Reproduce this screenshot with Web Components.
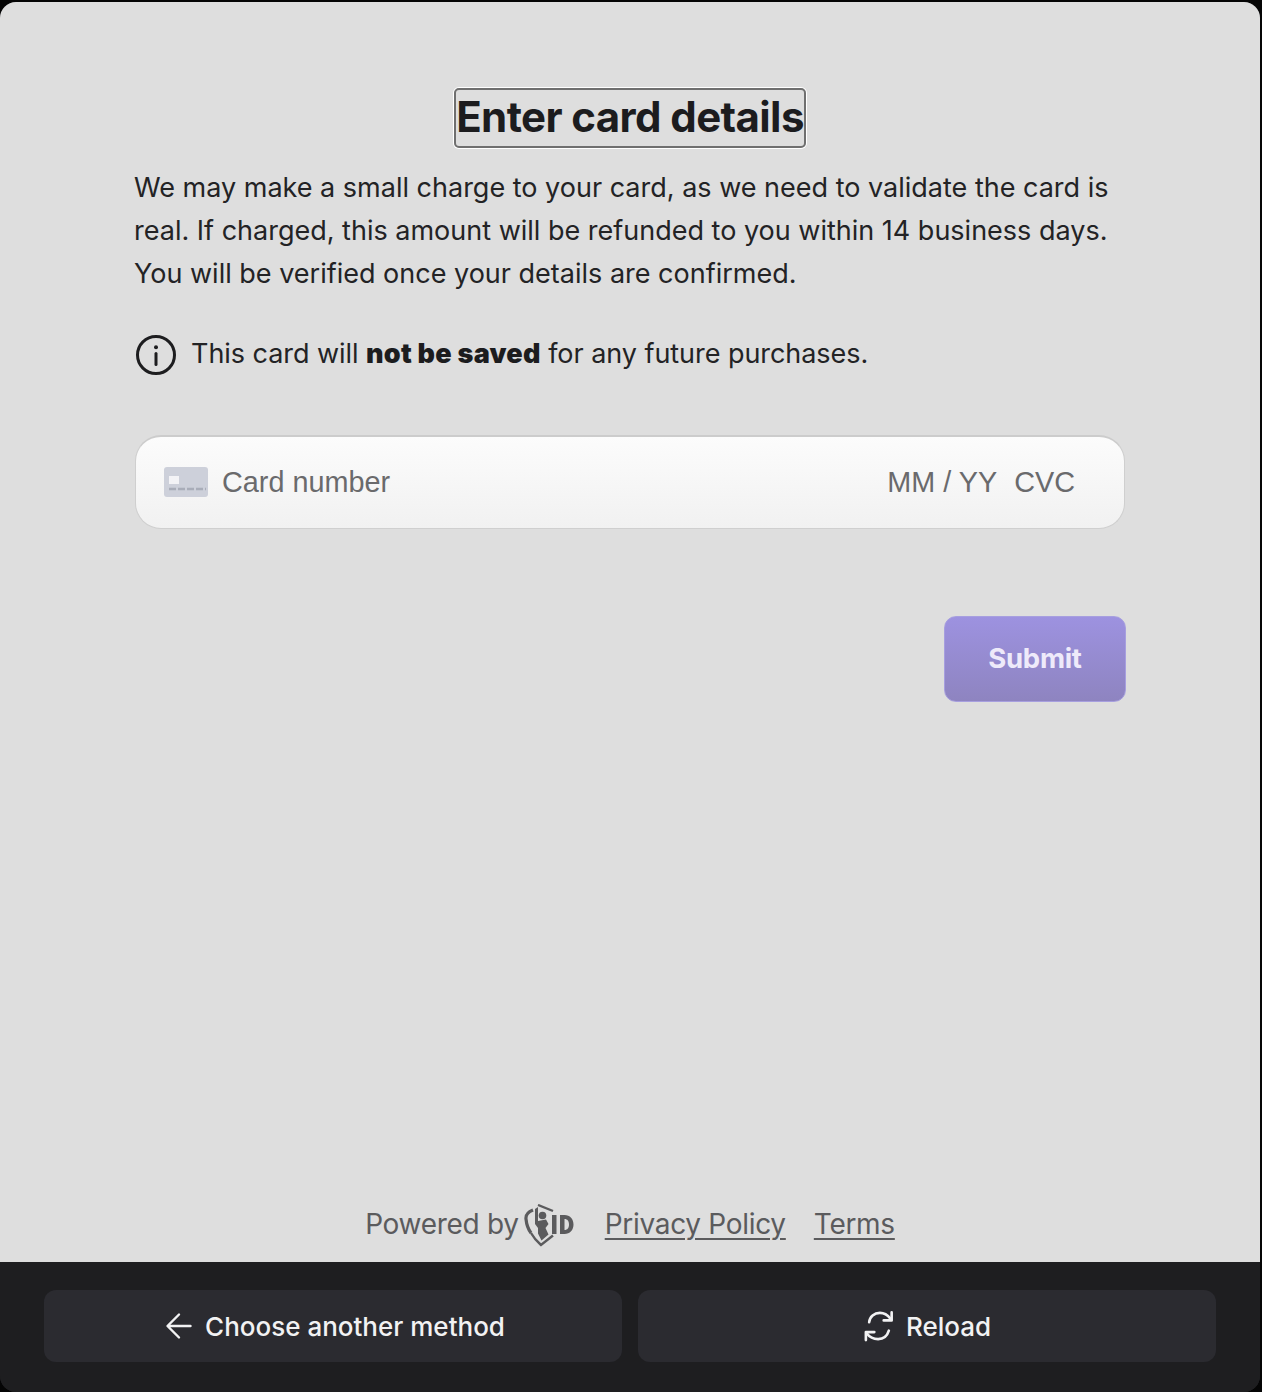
<!DOCTYPE html>
<html lang="en">
<head>
<meta charset="utf-8">
<title>Enter card details</title>
<style>
  html, body { margin: 0; padding: 0; background: #050505; }
  body { font-family: Inter, "Liberation Sans", sans-serif; }
</style>
</head>
<body>
<verify-modal>
  <card-form slot="content"></card-form>
  <verify-footer slot="content"></verify-footer>
  <action-button slot="actions" icon="back">Choose another method</action-button>
  <action-button slot="actions" icon="reload">Reload</action-button>
</verify-modal>

<script>
// Outer window: light panel above, dark action bar below
class VerifyModal extends HTMLElement {
  constructor() {
    super();
    this.attachShadow({ mode: 'open' });
    this.shadowRoot.innerHTML = `
      <style>
        :host { display: block; width: 1260px; height: 1390px; padding-top: 2px; }
        .window { display: flex; flex-direction: column; height: 100%; border-radius: 16px; overflow: hidden; background: #1e1e20; }
        .panel { flex: 1; display: flex; flex-direction: column; background: #dedede; padding: 86px 134px 0 134px; }
        .bar { display: flex; gap: 16px; height: 130px; box-sizing: border-box; padding: 28px 44px 0 44px; background: #1e1e20; }
      </style>
      <div class="window">
        <div class="panel"><slot name="content"></slot></div>
        <div class="bar"><slot name="actions"></slot></div>
      </div>
    `;
  }
}

// Card details form
class CardForm extends HTMLElement {
  constructor() {
    super();
    this.attachShadow({ mode: 'open' });
    this.shadowRoot.innerHTML = `
      <style>
        :host { display: flex; flex-direction: column; flex: 1; color: #1d1d1f; }
        h1 { align-self: center; margin: 0; padding-bottom: 2px; font-size: 42px; line-height: 54px; font-weight: 700; letter-spacing: -0.6px; color: #1c1c1e;
             border: 2px solid #6f6f6f; border-radius: 5px; box-shadow: 0 0 0 1px #fff; white-space: nowrap; }
        p { margin: 18px 0 0; width: 1000px; font-size: 27px; line-height: 43px; color: #232325; }
        .note { display: flex; align-items: center; gap: 14px; margin-top: 37px; margin-left: 1px; font-size: 27px; line-height: 44px; letter-spacing: -0.05px; color: #232325; }
        .note svg { flex: none; margin-top: 2px; }
        .note b { font-weight: 900; color: #1c1c1e; letter-spacing: 0.25px; }
        .actions { display: flex; justify-content: flex-end; margin-top: 87px; }
      </style>
      <h1>Enter card details</h1>
      <p>We may make a small charge to your card, as we need to validate the card is real. If charged, this amount will be refunded to you within 14 business days. You will be verified once your details are confirmed.</p>
      <div class="note">
        <svg width="42" height="42" viewBox="0 0 42 42" fill="none" stroke="#1d1d1f" stroke-width="3">
          <circle cx="21" cy="21" r="18.5"></circle>
          <path d="M21 19.500v11" stroke-linecap="round"></path>
          <circle cx="21" cy="13.200" r="2" fill="#1d1d1f" stroke="none"></circle>
        </svg>
        <span>This card will <b>not be saved</b> for any future purchases.</span>
      </div>
      <card-input></card-input>
      <div class="actions"><submit-button>Submit</submit-button></div>
    `;
  }
}

// Stripe style card input
class CardInput extends HTMLElement {
  constructor() {
    super();
    this.attachShadow({ mode: 'open' });
    this.shadowRoot.innerHTML = `
      <style>
        :host { display: block; margin: 59px 0 0 1px; width: 990px; }
        .field { display: flex; align-items: center; height: 94px; box-sizing: border-box; padding: 0 49px 0 28px;
                 border: 1px solid #cfcfcf; border-top: 2px solid #cccccc; border-radius: 26px;
                 background: linear-gradient(#fcfcfc, #f1f1f1);
                 font-family: "Liberation Sans", Arial, sans-serif; font-size: 28.8px; color: #6a6a6c; }
        svg { flex: none; margin: -2px 14px 0 0; }
        .num { flex: 1; }
        .exp { margin-right: 17px; }
      </style>
      <div class="field">
        <svg width="44" height="30" viewBox="0 0 44 30">
          <rect width="44" height="30" rx="3" fill="#cdd0da"></rect>
          <rect x="5" y="9" width="10" height="8" fill="#f3f3f6"></rect>
          <path d="M5 22h37" stroke="#a9adb9" stroke-width="2.500" stroke-dasharray="7 2"></path>
        </svg>
        <span class="num">Card number</span>
        <span class="exp">MM / YY</span>
        <span>CVC</span>
      </div>
    `;
  }
}

class SubmitButton extends HTMLElement {
  constructor() {
    super();
    this.attachShadow({ mode: 'open' });
    this.shadowRoot.innerHTML = `
      <style>
        :host { display: block; }
        button { display: block; width: 182px; height: 86px; padding: 0 0 2px; border: 1px solid #a79fdf; border-radius: 12px;
                 background: linear-gradient(#9d92e0, #8e84c0); color: #eeeafa;
                 font: 700 27.5px Inter, "Liberation Sans", sans-serif; letter-spacing: -0.3px; }
      </style>
      <button type="button"><slot></slot></button>
    `;
  }
}

class VerifyFooter extends HTMLElement {
  constructor() {
    super();
    this.attachShadow({ mode: 'open' });
    this.shadowRoot.innerHTML = `
      <style>
        :host { display: flex; justify-content: center; align-items: center; height: 76px; font-size: 28px; letter-spacing: -0.3px; color: #5b5b5d; }
        .by { display: flex; align-items: center; gap: 5px; }
        svg { flex: none; margin-top: 4px; }
        a { color: inherit; text-decoration: underline; text-underline-offset: 4px; text-decoration-thickness: 2px; }
        .privacy { margin-left: 29px; }
        .terms { margin-left: 28px; }
      </style>
      <span class="by">Powered by
        <svg width="52" height="44" viewBox="0 0 52 44" fill="none" stroke="#5b5b5d">
          <path d="M9 6C4 8 1.500 11 2 15c.5 5 2 10 5 14" stroke-width="3.200"></path>
          <path d="M7 29c2.500 4.500 6 8.500 10 12l12-9.500" stroke-width="2.400"></path>
          <path d="M14 1l15 6" stroke-width="2.400"></path>
          <g fill="#5b5b5d" stroke="none">
            <path d="M11 5l3-2v21l-3-4z"></path>
            <circle cx="18.500" cy="11.500" r="3.800"></circle>
            <path d="M14 17l8-1.500 2.500 4.500-3 4 3 6.500-7 6-3.500-7z"></path>
            <rect x="28" y="11" width="4.500" height="19"></rect>
            <path d="M36 11h4.500c5.500 0 9 4 9 9.500s-3.500 9.500-9 9.500H36zM40.500 15v11c3 0 4.500-2.200 4.500-5.500S43.500 15 40.500 15z" fill-rule="evenodd"></path>
          </g>
        </svg>
      </span>
      <a class="privacy" href="#">Privacy Policy</a>
      <a class="terms" href="#">Terms</a>
    `;
  }
}

class ActionButton extends HTMLElement {
  constructor() {
    super();
    this.attachShadow({ mode: 'open' });
    const icons = {
      back: `<svg width="28" height="28" viewBox="0 0 28 28" fill="none" stroke="#f2f2f3" stroke-width="2.400" stroke-linecap="round" stroke-linejoin="round"><path d="M26.500 14H4M15 2.500L3.500 14 15 25.500"></path></svg>`,
      reload: `<svg width="30" height="32" viewBox="0 0 32 34" fill="none" stroke="#f2f2f3" stroke-width="2.800" stroke-linecap="round" stroke-linejoin="round"><path d="M5.500 13C6 7 11 3 17 3c4 0 8 2 11 6"></path><path d="M29.500 2.500V11H21"></path><path d="M26.500 22C25 27 21 31 15 31c-5 0-9-2-12-6"></path><path d="M2 32v-8.500h9"></path></svg>`
    };
    this.shadowRoot.innerHTML = `
      <style>
        :host { display: block; flex: 1; }
        button { display: flex; align-items: center; justify-content: center; gap: 13px; width: 100%; height: 72px; padding: 0 0 0 3px; border: 0; border-radius: 12px;
                 background: #2b2b30; color: #f2f2f3; font: 500 26px Inter, "Liberation Sans", sans-serif; }
        :host([icon="reload"]) button { gap: 12px; padding-left: 1px; }
      </style>
      <button type="button">${icons[this.getAttribute('icon')] || ''}<slot></slot></button>
    `;
  }
}

customElements.define('verify-modal', VerifyModal);
customElements.define('card-form', CardForm);
customElements.define('card-input', CardInput);
customElements.define('submit-button', SubmitButton);
customElements.define('verify-footer', VerifyFooter);
customElements.define('action-button', ActionButton);
</script>
</body>
</html>
